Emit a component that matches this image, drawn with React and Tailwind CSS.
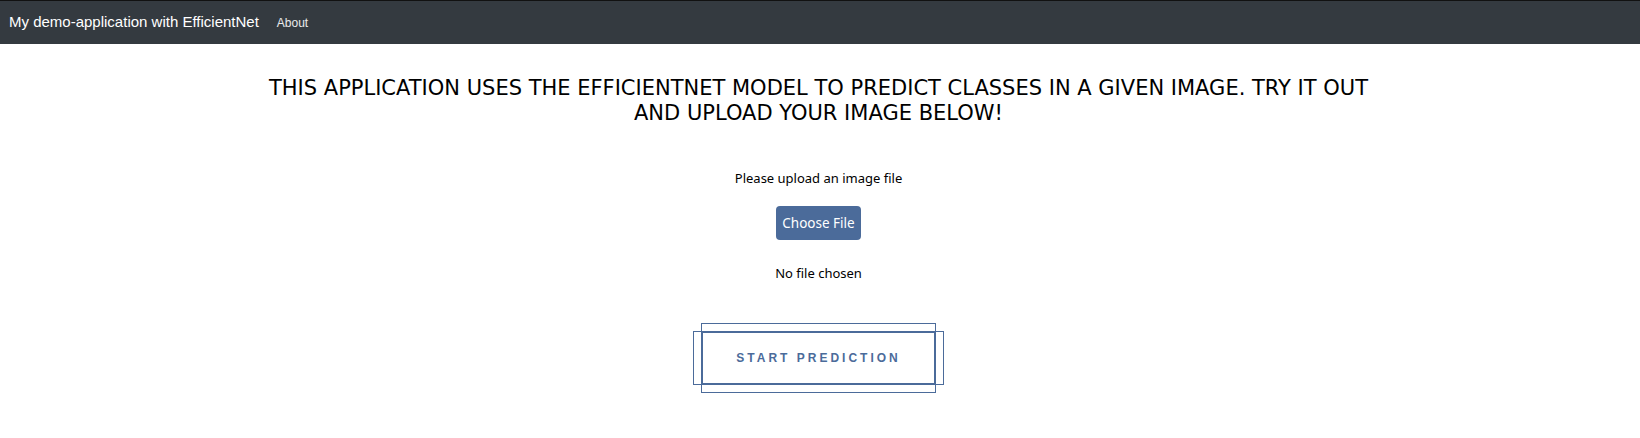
import React from 'react';

export default function App() {
  return (
    <div className="min-h-screen bg-white" style={{ fontFamily: '"Noto Sans", sans-serif' }}>
      {/* Navbar */}
      <nav className="h-[44px] bg-[#343a40] border-t border-[#111] flex items-center px-[9px] gap-[18px] font-['Liberation_Sans',Arial,sans-serif]">
        <span className="text-white text-[15px]">My demo-application with EfficientNet</span>
        <span className="text-white/90 text-[12px]">About</span>
      </nav>

      <main className="flex flex-col items-center pr-[3px]">
        <h1 className="mt-[32px] max-w-[1100px] text-center text-[21px] leading-[25px] text-black font-['DejaVu_Sans',sans-serif]">
          THIS APPLICATION USES THE EFFICIENTNET MODEL TO PREDICT CLASSES IN A GIVEN IMAGE. TRY IT OUT AND UPLOAD YOUR IMAGE BELOW!
        </h1>

        <p className="mt-[43px] text-[13px] leading-[18px] text-black">Please upload an image file</p>

        <button className="mt-[19px] w-[85px] h-[34px] rounded-[4px] bg-[#4b6b9a] text-white text-[13.5px]">
          Choose File
        </button>

        <p className="mt-[24px] text-[13px] leading-[18px] text-black">No file chosen</p>

        {/* Start prediction button */}
        <button className="relative mt-[49px] w-[235px] h-[54px] flex items-center justify-center">
          <span className="absolute inset-0 border-2 border-[#4b6b9a]"></span>
          <span className="absolute top-0 bottom-0 -left-2 -right-2 border border-[#4b6b9a]"></span>
          <span className="absolute -top-2 -bottom-2 left-0 right-0 border border-[#4b6b9a]"></span>
          <span className="relative text-[12px] font-bold tracking-[3px] text-[#4b6b9a] font-['Liberation_Sans',Arial,sans-serif]">
            START PREDICTION
          </span>
        </button>
      </main>
    </div>
  );
}
